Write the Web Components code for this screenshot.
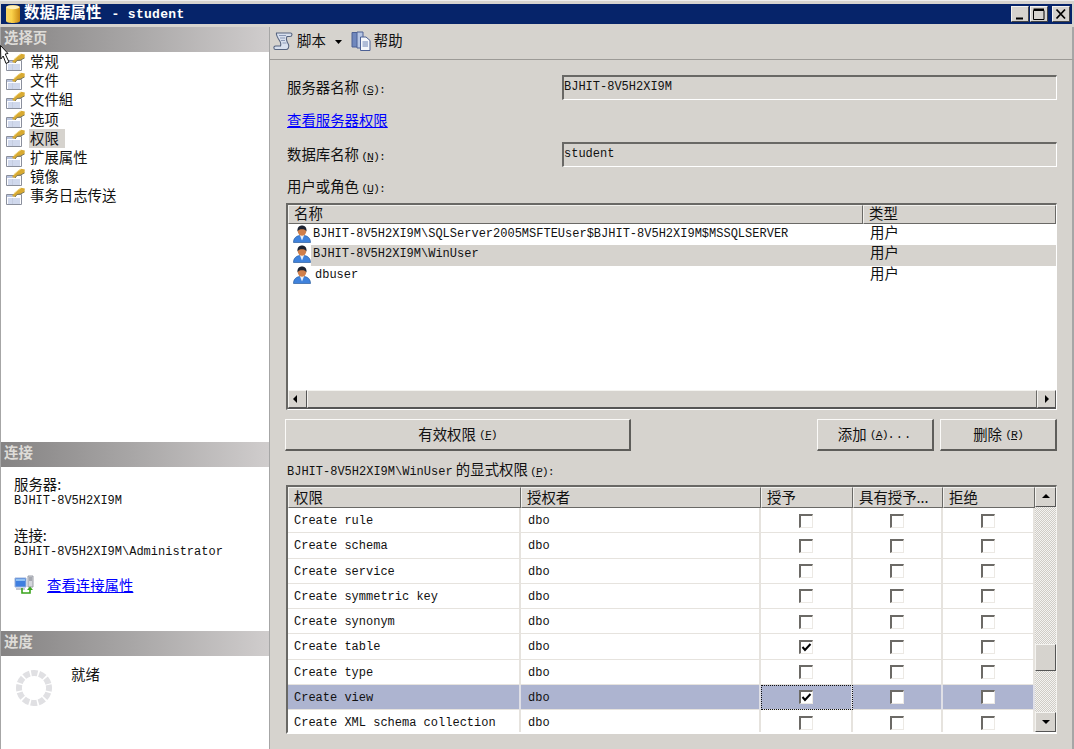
<!DOCTYPE html>
<html lang="zh"><head><meta charset="utf-8"><title>数据库属性 - student</title>
<style>
html,body{margin:0;height:100%;overflow:hidden;background:#d6d3ce}
body{font:14.4px/18px "Noto Sans CJK SC","Liberation Sans",sans-serif;color:#111}
</style></head><body>
<sql-dialog>
  <title-bar slot="title">数据库属性 - student</title-bar>
  <side-pane slot="side">
    <side-section slot="s1" heading="选择页" style="height:415px">
      <nav-list>
        <nav-item>常规</nav-item><nav-item>文件</nav-item><nav-item>文件組</nav-item><nav-item>选项</nav-item>
        <nav-item active>权限</nav-item><nav-item>扩展属性</nav-item><nav-item>镜像</nav-item><nav-item>事务日志传送</nav-item>
      </nav-list>
    </side-section>
    <side-section slot="s2" heading="连接" style="height:189px"><conn-info></conn-info></side-section>
    <side-section slot="s3" heading="进度" style="flex:1"><progress-info></progress-info></side-section>
  </side-pane>
  <tool-bar slot="toolbar"></tool-bar>
  <perm-form slot="form">
    <read-field style="margin-top:15px" label="服务器名称" key="S" value="BJHIT-8V5H2XI9M"></read-field>
    <blue-link style="margin-top:10px;height:20px;padding-left:1px">查看服务器权限</blue-link>
    <read-field style="margin-top:12px" label="数据库名称" key="N" value="student"></read-field>
    <form-label style="margin-top:11px">用户或角色 <key-hint>(<u>U</u>):</key-hint></form-label>
    <user-list style="margin-top:7px">
      <user-row name="BJHIT-8V5H2XI9M\SQLServer2005MSFTEUser$BJHIT-8V5H2XI9M$MSSQLSERVER"></user-row>
      <user-row selected name="BJHIT-8V5H2XI9M\WinUser"></user-row>
      <user-row style="--pad:3px" name="dbuser"></user-row>
    </user-list>
    <button-row style="margin-top:9px"></button-row>
    <form-label style="margin-top:10px"><mono-text>BJHIT-8V5H2XI9M\WinUser</mono-text> 的显式权限 <key-hint>(<u>P</u>):</key-hint></form-label>
    <perm-grid style="margin-top:6px">
      <perm-row name="Create rule"></perm-row>
      <perm-row name="Create schema"></perm-row>
      <perm-row name="Create service"></perm-row>
      <perm-row name="Create symmetric key"></perm-row>
      <perm-row name="Create synonym"></perm-row>
      <perm-row name="Create table" grant></perm-row>
      <perm-row name="Create type"></perm-row>
      <perm-row name="Create view" grant selected></perm-row>
      <perm-row name="Create XML schema collection"></perm-row>
    </perm-grid>
  </perm-form>
</sql-dialog>
<script>
const MONO='"Liberation Mono","Noto Sans CJK SC",monospace';
const CJK='"Noto Sans CJK SC","Liberation Sans",sans-serif';
const LCJK='"Liberation Sans","Noto Sans CJK SC",sans-serif';
function def(name,css,html,init){
  customElements.define(name,class extends HTMLElement{
    connectedCallback(){
      if(this.shadowRoot)return;
      const r=this.attachShadow({mode:'open'});
      const h=typeof html==='function'?html(this):html;
      r.innerHTML='<style>'+css+'</style>'+h;
      if(init)init(this,r);
    }
  });
}
const esc=s=>String(s).replace(/&/g,'&amp;').replace(/</g,'&lt;');
const navIcon='<svg width="20" height="18" viewBox="0 0 20 18"><path d="M1.500 7.500H16.500V17.500H1.500Z" fill="#fdfdff" stroke="#8a8f9c"/><path d="M2 8H9V10H2Z" fill="#b9c4de"/><path d="M3 12H15M3 14H15M3 16H15" stroke="#a3b4da"/><path d="M7.500 11V17" stroke="#c5cde0"/><path d="M7 9L9 6.500L13 3L16 .8L19.800 1.500L19.500 5L15.500 7L12 7.500L10 10Z" fill="#d8aa32"/><path d="M9 6.500L13 3L16 1" fill="none" stroke="#f0d47c"/><path d="M10 10L12 7.500L15.500 7L19.500 5" fill="none" stroke="#7f7a5a"/></svg>';
const userIcon='<svg width="18" height="18" viewBox="0 0 18 18"><path d="M.5 17.500C.5 12.500 4 11 6.500 10.500L9 13L11.500 10.500C14 11 17.500 12.500 17.500 17.500Z" fill="#3f82dc" stroke="#2a5d9f" stroke-width=".7"/><path d="M7.200 11L9 15.500L10.800 11Z" fill="#eaf1fb"/><circle cx="9" cy="6.500" r="4.200" fill="#d07f4a"/><path d="M4.500 6.500C4 2.500 6.200 .5 9 .5S14 2.500 13.500 6.500C12.800 4.800 11 4.200 9 4.200S5.200 4.800 4.500 6.500Z" fill="#1d2433"/></svg>';
const keyCss=`font:11.500px/15px ${MONO};letter-spacing:-1px`;

def('sql-dialog',
`:host{display:grid;grid-template-columns:270px 1fr;grid-template-rows:27px 33px 1fr;height:749px;position:relative;overflow:hidden}
.t{grid-column:1/3}.s{grid-row:2/4;display:flex;min-height:0}
svg{position:absolute;left:0;top:45px}`,
`<div class="t"><slot name="title"></slot></div><div class="s"><slot name="side"></slot></div>
<slot name="toolbar"></slot><slot name="form"></slot>
<svg width="12" height="22" viewBox="0 0 12 22"><path d="M.5 .5L8 8.500L5.200 9L9 17L6 18.500L3.200 11L.8 14Z" fill="#fff" stroke="#111"/></svg>`);

def('title-bar',
`:host{display:block;height:27px;box-sizing:border-box;padding:3px 2px 3px 1px;background:#d6d3ce;border-top:1px solid #eee}
.b{height:20px;background:#06246a;color:#fff;display:flex;align-items:center;font:bold 15.500px/20px ${CJK};padding-left:4px;box-sizing:border-box}
.n{margin-left:3px;white-space:pre;transform:translateY(-1px)}
.m{font:bold 13px/20px ${MONO};letter-spacing:.3px;white-space:pre;margin-left:2px}
.w{margin-left:auto;display:flex;padding-right:2px}
win-btn+win-btn{margin-left:1px}win-btn:last-child{margin-left:4px}`,
`<div class="b"><svg width="16" height="20" viewBox="0 0 16 20"><defs><linearGradient id="g" x1="0" x2="1"><stop offset="0" stop-color="#f8d468"/><stop offset=".4" stop-color="#fbd24a"/><stop offset="1" stop-color="#c98812"/></linearGradient></defs><path d="M1 3C1 .6 15 .6 15 3V17C15 19.600 1 19.600 1 17Z" fill="url(#g)"/><ellipse cx="8" cy="3.200" rx="6.500" ry="2" fill="#fff0bb"/></svg><span class="n">数据库属性<span class="m"> - student</span></span><div class="w"><win-btn kind="min"></win-btn><win-btn kind="max"></win-btn><win-btn kind="close"></win-btn></div></div>`);

def('win-btn',
`:host{display:block;width:18px;height:16px;box-sizing:border-box;background:#d6d3ce;border:1px solid;border-color:#f4f3f0 #444 #444 #f4f3f0}svg{display:block}`,
e=>({min:'<svg width="16" height="14"><path d="M4 11.500H11" stroke="#000" stroke-width="2"/></svg>',
max:'<svg width="16" height="14"><path d="M2.500 3.500H13V12.500H2.500Z" fill="none" stroke="#000"/><path d="M2.500 2.500H13" stroke="#000" stroke-width="2"/></svg>',
close:'<svg width="16" height="14"><path d="M3.500 2.500L12 11.500M12 2.500L3.500 11.500" stroke="#000" stroke-width="1.800"/></svg>'}[e.getAttribute('kind')]));

def('side-pane',
`:host{display:flex;flex-direction:column;width:270px;box-sizing:border-box;border-left:1px solid #a6a6a6;border-right:1px solid #a6a6a6;background:#fff;min-height:0}
slot{display:contents}`,
`<slot name="s1"></slot><slot name="s2"></slot><slot name="s3"></slot>`);

def('side-section',
`:host{display:flex;flex-direction:column;min-height:0;box-sizing:border-box}
h2{margin:0;height:25px;flex:none;padding-left:3px;background:linear-gradient(90deg,#858383,#a9a7a7 50%,#d0cdcd);color:#dedcd8;font:bold 14.400px/19px ${CJK}}
.c{flex:1;background:#fff}`,
e=>`<h2>${esc(e.getAttribute('heading'))}</h2><div class="c"><slot></slot></div>`);

def('nav-list',`:host{display:block}`,`<slot></slot>`);
def('nav-item',
`:host{display:flex;height:19.200px;align-items:center;padding-left:4px;font:14.400px/17px ${CJK};white-space:nowrap}
span{margin-left:5px;padding:0 5px 0 0;display:block;height:19px}
:host([active]) span{background:#d6d3ce;padding:0 6px 0 1px;margin-left:4px}`,
navIcon.replace('<svg','<svg style="flex:none"')+'<span><slot></slot></span>');

def('conn-info',
`:host{display:block;padding:9px 0 0 13px}
.c{font:14.400px/16px ${CJK}}.m{font:12px/15px ${MONO};white-space:pre;margin-top:2px}
.g{margin-top:18px}.l{display:flex;align-items:center;margin-top:15px}svg{margin-right:13px}`,
`<div class="c">服务器:</div><div class="m">BJHIT-8V5H2XI9M</div>
<div class="g c">连接:</div><div class="m">BJHIT-8V5H2XI9M\\Administrator</div>
<div class="l"><svg width="20" height="20" viewBox="0 0 20 20"><path d="M1 3H12V12H1Z" fill="#3f7fe0" stroke="#9ab0d8"/><path d="M2 4H11V6H2Z" fill="#8fc0f4"/><path d="M2 13H11V15H2Z" fill="#c4c7cf"/><path d="M14 1H19V12H14Z" fill="#d4d6dc" stroke="#9a9da6"/><path d="M15 3H18M15 5H18" stroke="#7a7d86"/><path d="M8 13V18H16V14" fill="none" stroke="#3aa41c" stroke-width="1.600"/><path d="M13 15L16 11.500L19 15Z" fill="#3aa41c"/></svg><blue-link>查看连接属性</blue-link></div>`);

def('progress-info',
`:host{display:flex;padding:10px 0 0 15px;position:relative}
svg{margin-top:4px;flex:none}span{margin-left:19px;font:14.400px/16px ${CJK}}`,
`<svg width="36" height="36" viewBox="0 0 36 36"><circle cx="18" cy="18" r="15" fill="none" stroke="#e0e0e3" stroke-width="6" stroke-dasharray="6.200 1.654" transform="rotate(-12 18 18)"/></svg><span>就绪</span>`);

def('blue-link',
`:host{display:block;color:#00f;text-decoration:underline;font:14.400px/20px ${CJK}}`,`<slot></slot>`);

def('tool-bar',
`:host{display:flex;align-items:center;height:33px;box-sizing:border-box;padding:0 0 4px 3px;border-bottom:1px solid #9c9a96;border-right:2px solid #a6a6a6;font:14.400px/18px ${CJK}}
span{margin-left:4px;height:20px}svg{flex:none}.a{margin:2px 9px 0 9px}.h{margin-left:3px}`,
`<svg width="20" height="20" viewBox="0 0 20 20"><path d="M3.500 2H17.500C19.500 2 19.500 5.500 17 5.500H14C12.500 8 14 11 15.500 13.500C16.500 16 15 18.500 13 18.500H2.500C.5 18.500 .2 15 2.500 15H7.500C8.500 12.500 7 10 5.500 8C4 5.500 3 3.500 3.500 2Z" fill="#d8e0ee" stroke="#56647f" stroke-width="1.100"/><path d="M6 4.500H13M7 7H12M8 9.500H12M9.500 12H13.500" stroke="#8b99b6"/></svg><span>脚本</span>
<svg class="a" width="7" height="4"><path d="M0 0H7L3.500 4Z" fill="#000"/></svg>
<svg width="20" height="20" viewBox="0 0 20 20"><path d="M1 1.500H9V16H1Z" fill="#6f87bd" stroke="#4d6194"/><path d="M6 1H12V17H6Z" fill="#b7c6e4" stroke="#4d6194"/><path d="M9.500 6H15L19 9.500V19.500H9.500Z" fill="#f5f7fb" stroke="#4d6194"/><path d="M11.500 11H17M11.500 13H17M11.500 15H17" stroke="#6b82b4"/></svg><span class="h">帮助</span>`);

def('perm-form',
`:host{display:flex;flex-direction:column;padding:0 15px 0 16px;min-width:0;border-right:2px solid #a6a6a6}`,`<slot></slot>`);

def('read-field',
`:host{display:grid;grid-template-columns:276px 1fr;height:25px;align-items:center}
.l{padding-left:1px;font:14.400px/16px ${CJK};white-space:pre;height:18px}
.m{${keyCss};margin-left:-1px}
.b{height:25px;box-sizing:border-box;border:2px solid;border-color:#696865 #fff #fff #696865;border-right-width:1px;border-bottom-width:1px;font:12px/20px ${MONO};padding:0;background:#d6d3ce}`,
e=>`<div class="l">${esc(e.getAttribute('label'))} <span class="m">(<u>${e.getAttribute('key')}</u>):</span></div><div class="b">${esc(e.getAttribute('value'))}</div>`);

def('form-label',`:host{display:block;height:18px;padding-left:1px;font:14.400px/16px ${CJK};white-space:pre}`,`<slot></slot>`);
def('key-hint',`:host{${keyCss};margin-left:-1px}`,`<slot></slot>`);
def('mono-text',`:host{font:12px/15px ${MONO}}`,`<slot></slot>`);

const hCell=`box-sizing:border-box;border:1px solid;border-color:#f2f1ee #6a6966 #6a6966 #f2f1ee;font:14.400px/15px ${CJK};white-space:nowrap;background:#d6d3ce`;

def('user-list',
`:host{display:flex;flex-direction:column;height:207px;box-sizing:border-box;border:2px solid;border-color:#696865 #fff #fff #696865;border-right-width:1px;border-bottom-width:1px;background:#fff}
.h{display:grid;grid-template-columns:575px 1fr;height:19px;flex:none}.h div{${hCell};padding-left:5px;font-family:${LCJK};line-height:17px}
.b{flex:1;padding-top:1px}`,
`<div class="h"><div>名称</div><div>类型</div></div><div class="b"><slot></slot></div><h-scroll></h-scroll>`);

def('user-row',
`:host{display:grid;grid-template-columns:24px 551px 1fr;height:20.300px;align-items:center;font:12px/18px ${MONO};white-space:pre}
svg{margin:-2px 0 0 5px;display:block}
.n{height:100%;margin-right:-551px;grid-column:2;padding-left:var(--pad,1px)}
.t{grid-column:3;padding-left:7px;font:14.400px/16px ${LCJK};height:20px}
:host([selected]){background:linear-gradient(90deg,#fff 23px,#d6d3ce 23px)}`,
e=>`${userIcon}<div class="n">${esc(e.getAttribute('name'))}</div><div class="t">用户</div>`);

const arrows={l:'<path d="M7 4V12L3 8Z"/>',r:'<path d="M6 4V12L10 8Z"/>',u:'<path d="M4 10H12L8 6Z"/>',d:'<path d="M4 7H12L8 11Z"/>'};
def('scroll-btn',
`:host{display:block;box-sizing:border-box;background:#d6d3ce;border:1px solid;border-color:#f4f3f0 #555 #555 #f4f3f0;width:20px;height:19px;flex:none}svg{display:block;margin:0 auto}`,
e=>`<svg width="16" height="16" fill="#000">${arrows[e.getAttribute('dir')]}</svg>`);

def('h-scroll',
`:host{display:flex;height:18px;flex:none;background:#d6d3ce;border-bottom:1px solid #555}
.t{flex:1;border:1px solid;border-color:#f4f3f0 #6a6966 #555 #f4f3f0}
scroll-btn{width:19px;height:18px}`,
`<scroll-btn dir="l"></scroll-btn><div class="t"></div><scroll-btn dir="r"></scroll-btn>`);

def('v-scroll',
`:host{display:flex;flex-direction:column;width:21px;flex:none;background:repeating-conic-gradient(#cfccc6 0 25%,#f4f3f1 0 50%) 0 0/2px 2px}
.a{height:137px;flex:none}.b{flex:1}
.th{height:27px;box-sizing:border-box;background:#d6d3ce;border:1px solid;border-color:#f4f3f0 #555 #555 #f4f3f0;flex:none}
scroll-btn{width:21px;height:20px}`,
`<scroll-btn dir="u"></scroll-btn><div class="a"></div><div class="th"></div><div class="b"></div><scroll-btn dir="d"></scroll-btn>`);

def('win-button',
`:host{display:flex;align-items:center;justify-content:center;box-sizing:border-box;height:32px;background:#d6d3ce;border:1px solid;border-color:#fbfaf8 #5e5d5a #5e5d5a #fbfaf8;border-right-width:2px;border-bottom-width:2px;font:14.400px/18px ${CJK};white-space:pre}
.m{${keyCss}}.s{height:20px}.tl{font-size:12px;letter-spacing:1px}`,
e=>`<span class="s"><slot></slot></span><span class="m">(<u>${e.getAttribute('key')}</u>)<span class="tl">${e.getAttribute('tail')||''}</span></span>`);

def('button-row',
`:host{display:flex;height:32px;margin-left:-1px}
.x{width:346px}.y{width:117px;margin-left:auto}.z{width:117px;margin-left:6px}`,
`<win-button class="x" key="F">有效权限 </win-button><win-button class="y" key="A" tail="...">添加 </win-button><win-button class="z" key="R">删除 </win-button>`);

const cols='233px 240px 92px 90px 92px';
def('perm-grid',
`:host{display:flex;height:249px;box-sizing:border-box;border:2px solid;border-color:#696865 #f4f3f0 transparent #696865;border-right-width:1px;background:#fff;overflow:hidden}
.l{width:747px;flex:none;display:flex;flex-direction:column;overflow:hidden}
.h{display:grid;grid-template-columns:${cols};height:21px;flex:none}.h div{${hCell};padding-left:5px;line-height:17px}`,
`<div class="l"><div class="h"><div>权限</div><div>授权者</div><div>授予</div><div>具有授予...</div><div>拒绝</div></div><slot></slot></div><v-scroll></v-scroll>`);

def('perm-row',
`:host{display:grid;grid-template-columns:${cols};height:25.250px;flex:none;box-sizing:border-box;font:12px/26px ${MONO};white-space:pre;border-bottom:1px solid #e6e3de}
div{padding-left:6px;border-right:2px solid #e6e3de;height:25px;box-sizing:border-box}
div.g{padding-left:7px}
.c{padding:0;display:flex;align-items:center;justify-content:center}
:host([selected]){background:#adb4d0}
:host([selected]) .c1{outline:1px dotted #111;outline-offset:-1px}
:host([selected]) div{border-right-color:#dfdfe6}`,
e=>{const g=e.hasAttribute('grant');
return `<div>${esc(e.getAttribute('name'))}</div><div class="g">dbo</div><div class="c c1"><check-box${g?' checked':''}></check-box></div><div class="c"><check-box></check-box></div><div class="c"><check-box></check-box></div>`});

def('check-box',
`:host{display:block;width:14px;height:14px;box-sizing:border-box;background:#fff;border:2px solid;border-color:#6c6a66 #ece9e4 #ece9e4 #6c6a66;border-right-width:1px;border-bottom-width:1px}
svg{display:block}`,
e=>e.hasAttribute('checked')?'<svg width="11" height="11"><path d="M1.500 5L4 8L9.500 2" fill="none" stroke="#000" stroke-width="2"/></svg>':'');
</script>
</body></html>
